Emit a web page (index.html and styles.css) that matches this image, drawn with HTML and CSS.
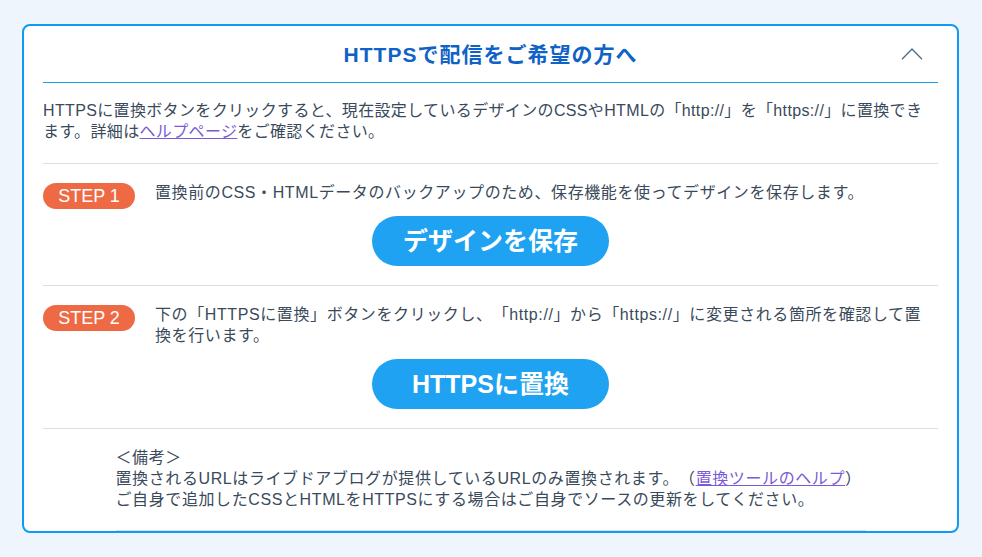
FILE: index.html
```html
<!DOCTYPE html>
<html lang="ja">
<head>
<meta charset="utf-8">
<title>HTTPSで配信をご希望の方へ</title>
<link rel="stylesheet" href="styles.css">
</head>
<body>
<div class="page">
  <section class="card">
    <header class="card-head">
      <h2 class="card-title">HTTPSで配信をご希望の方へ</h2>
      <span class="toggle" aria-label="閉じる">
        <svg width="22" height="12" viewBox="0 0 22 12"><polyline points="1,11.2 11,1 21,11.2" fill="none" stroke="#52728c" stroke-width="1.4"/></svg>
      </span>
    </header>
    <p class="intro">HTTPSに置換ボタンをクリックすると、現在設定しているデザインのCSSやHTMLの「http://」を「https://」に置換できます。詳細は<a class="link" href="#">ヘルプページ</a>をご確認ください。</p>
    <div class="step">
      <div class="step-row">
        <span class="badge">STEP 1</span>
        <p class="step-text">置換前のCSS・HTMLデータのバックアップのため、保存機能を使ってデザインを保存します。</p>
      </div>
      <button class="btn" type="button">デザインを保存</button>
    </div>
    <div class="step">
      <div class="step-row">
        <span class="badge">STEP 2</span>
        <p class="step-text">下の「HTTPSに置換」ボタンをクリックし、「http://」から「https://」に変更される箇所を確認して置換を行います。</p>
      </div>
      <button class="btn" type="button">HTTPSに置換</button>
    </div>
    <div class="notes-wrap">
      <div class="notes">
        <p class="note-line">＜備考＞</p>
        <p class="note-line">置換されるURLはライブドアブログが提供しているURLのみ置換されます。（<a class="link" href="#">置換ツールのヘルプ</a>）</p>
        <p class="note-line">ご自身で追加したCSSとHTMLをHTTPSにする場合はご自身でソースの更新をしてください。</p>
      </div>
    </div>
  </section>
</div>
</body>
</html>
```
FILE: styles.css
```css
* { box-sizing: border-box; }
html, body { margin: 0; padding: 0; }
body {
  background: #eef5fd;
  font-family: "Liberation Sans", "Noto Sans CJK JP", sans-serif;
  color: #3a4a5b;
  font-size: 16px;
  line-height: 21px;
  letter-spacing: 0.6px;
  text-spacing-trim: space-all;
}
.page {
  padding: 24px 23px 24px 22px;
}
.card {
  background: #fff;
  border: 2px solid #0d9bf4;
  border-radius: 8px;
  height: 509px;
  padding: 0 19px;
  overflow: hidden;
}
.card-head {
  position: relative;
  height: 57px;
  border-bottom: 1px solid #1a9ae8;
  display: flex;
  align-items: center;
  justify-content: center;
}
.card-title {
  margin: 0;
  font-size: 21px;
  line-height: 28px;
  font-weight: bold;
  color: #0f62c6;
  letter-spacing: 1px;
  padding-top: 1px;
}
.toggle {
  position: absolute;
  right: 15px;
  top: 22px;
  width: 22px;
  height: 12px;
  display: block;
}
.toggle svg { display: block; }
.intro {
  margin: 0;
  padding: 17px 0 21px;
  letter-spacing: 0.35px;
}
.link {
  color: #7a5ad8;
  text-decoration: underline;
}
.step {
  border-top: 1px solid #dedede;
  padding: 18px 0 19px;
}
.step-row {
  display: flex;
  align-items: flex-start;
  gap: 20px;
}
.badge {
  flex: none;
  width: 92px;
  height: 26px;
  margin: 1px 0 -6px;
  border-radius: 13px;
  background: #ee6a45;
  color: #fff;
  font-family: "Liberation Sans", sans-serif;
  font-size: 18px;
  line-height: 26px;
  text-align: center;
  letter-spacing: 0;
}
.step-text {
  margin: 0;
  flex: 1;
  padding-right: 10px;
}
.btn {
  display: block;
  margin: 13px auto 0;
  width: 237px;
  height: 50px;
  border: 0;
  border-radius: 25px;
  background: #1ea2f1;
  color: #fff;
  font-family: "Liberation Sans", "Noto Sans CJK JP", sans-serif;
  font-size: 25px;
  font-weight: bold;
  line-height: 50px;
  letter-spacing: 0;
  padding: 0;
  cursor: pointer;
}
.notes-wrap {
  border-top: 1px solid #dedede;
}
.notes {
  width: 750px;
  margin: 0 auto;
  padding: 18px 0 20px;
  border-bottom: 1px solid #dedede;
}
.note-line {
  margin: 0;
}
```
